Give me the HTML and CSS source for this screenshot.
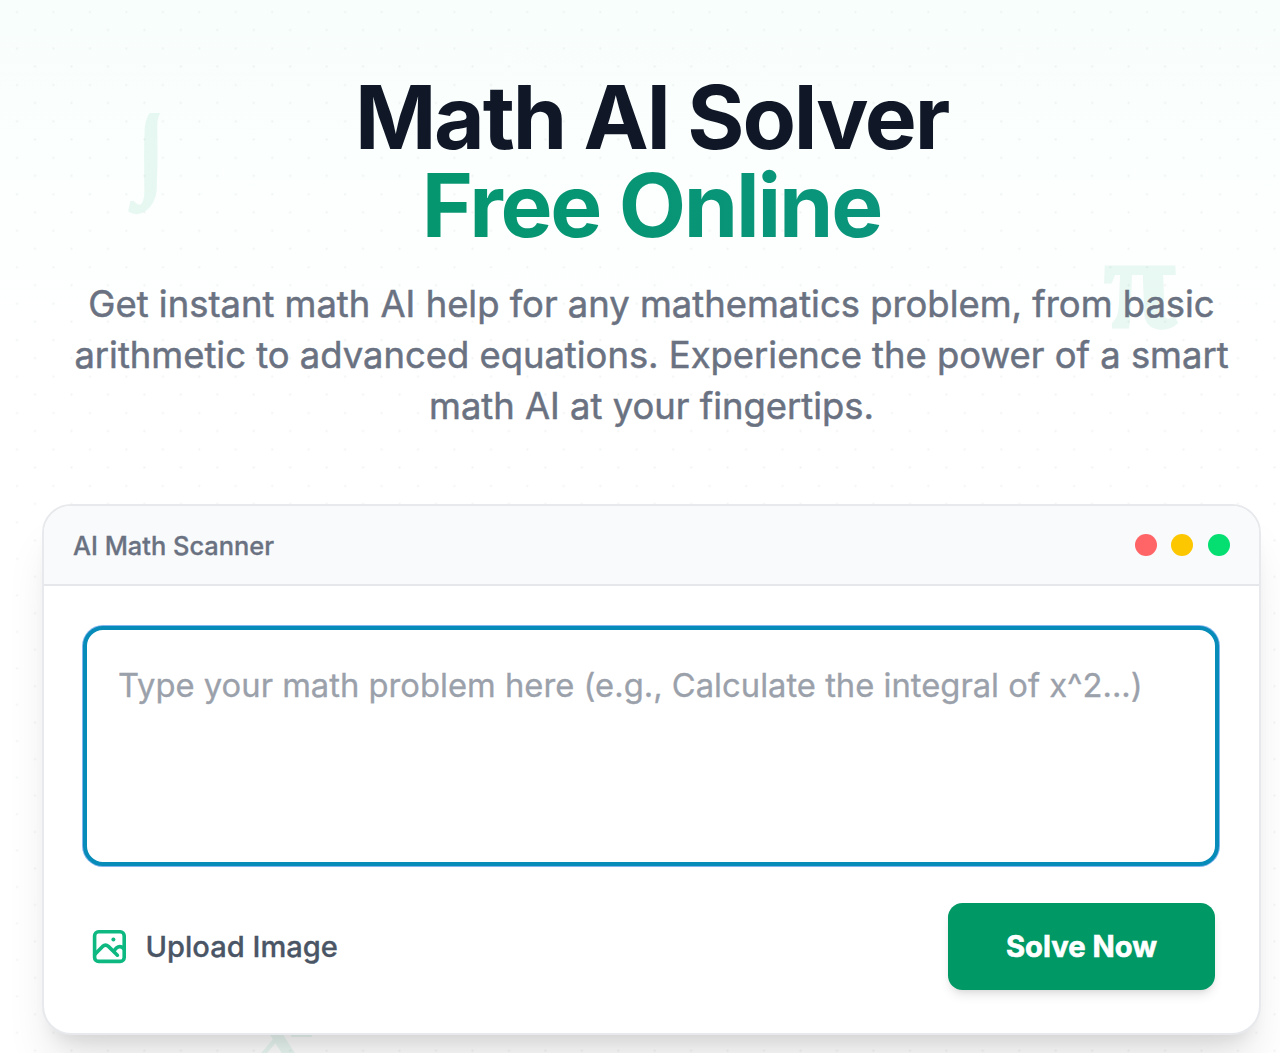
FILE: index.html
```html
<!DOCTYPE html>
<html lang="en">
<head>
<meta charset="utf-8">
<title>Math AI Solver Free Online</title>
<link rel="stylesheet" href="styles.css">
</head>
<body>
<main class="page">
  <span class="symbol integral" aria-hidden="true">∫</span>
  <span class="symbol pi" aria-hidden="true">π</span>
  <span class="symbol square" aria-hidden="true">x<sup class="power">2</sup></span>
  <h1 class="title"><span class="line first">Math AI Solver</span><span class="line accent">Free Online</span></h1>
  <p class="lead"><span class="line">Get instant math AI help for any mathematics problem, from basic</span> <span class="line">arithmetic to advanced equations. Experience the power of a smart</span> <span class="line">math AI at your fingertips.</span></p>
  <section class="card">
    <header class="card-head">
      <span class="card-title">AI Math Scanner</span>
      <div class="lights"><i class="light red"></i><i class="light yellow"></i><i class="light green"></i></div>
    </header>
    <div class="card-body">
      <textarea class="problem" placeholder="Type your math problem here (e.g., Calculate the integral of x^2...)"></textarea>
      <div class="actions">
        <div class="upload">
          <svg class="upload-icon" viewBox="0 0 34 34" fill="none" stroke="currentColor" stroke-width="3.6" stroke-linecap="round" stroke-linejoin="round">
            <rect x="2.6" y="1.8" width="29.6" height="29.6" rx="4"/>
            <path d="M2.7 24.5 10.6 16.4Q13.5 13.8 16.4 16.4L25.4 25.2"/>
            <path d="M22 20.6 24.2 18.2Q28 15 31.5 18.4"/>
            <circle cx="21.4" cy="9.6" r="2" fill="currentColor" stroke="none"/>
          </svg>
          <span class="upload-label">Upload Image</span>
        </div>
        <button class="solve" type="button">Solve Now</button>
      </div>
    </div>
  </section>
</main>
</body>
</html>
```
FILE: styles.css
```css
* { box-sizing: border-box; }
html { overflow: hidden; }
body {
  margin: 0;
  height: 1053px;
  overflow: hidden;
  font-family: Inter, "Liberation Sans", sans-serif;
  background: #fff;
}
.page {
  position: relative;
  width: 1302px;
  height: 1053px;
  padding: 74px 41px 0 42px;
  overflow: hidden;
  background:
    radial-gradient(circle at 17px 12px, rgba(80, 95, 90, .09) 0, rgba(80, 95, 90, 0) 1.7px) 0 0 / 36.46px 36.46px,
    radial-gradient(circle at 35px 30px, rgba(80, 95, 90, .09) 0, rgba(80, 95, 90, 0) 1.7px) 0 0 / 36.46px 36.46px,
    linear-gradient(#f8fefc 0, #fbfffd 150px, #fff 370px);
}
.line { display: block; white-space: nowrap; }
.title {
  position: relative;
  margin: 0;
  text-align: center;
  font-size: 87.4px;
  line-height: 87.5px;
  font-weight: 700;
  letter-spacing: -.025em;
  color: #101828;
}
.accent {
  width: fit-content;
  margin: 0 auto;
  color: transparent;
  background: linear-gradient(90deg, #05966f, #0a957c);
  background-clip: text;
}
.lead {
  position: relative;
  margin: 30px 0 0;
  text-align: center;
  font-size: 36.4px;
  line-height: 51px;
  color: #6a7282;
  -webkit-text-stroke: .5px #6a7282;
}
.symbol {
  position: absolute;
  font-family: "Liberation Serif", serif;
  font-weight: 700;
  line-height: 1;
  color: #00aa73;
  opacity: .08;
}
.integral {
  left: 128px;
  top: 83px;
  width: 32px;
  height: 150px;
  padding: 9px 0 0 8px;
  overflow: hidden;
  clip-path: inset(30px 0 0 0);
  font-size: 109px;
  -webkit-text-stroke: 4px #00aa73;
}
.pi {
  left: 1103px;
  top: 217px;
  font-size: 131px;
  font-style: italic;
  transform: skewX(12deg);
  -webkit-text-stroke: 3px #00aa73;
}
.square { left: 256px; top: 985px; font-size: 88px; }
.power { position: absolute; left: 33px; top: 9.5px; font-size: 50px; line-height: 1; }
.card {
  position: relative;
  width: 1219px;
  height: 531px;
  margin-top: 72px;
  border: 2px solid #e7e9ec;
  border-radius: 29px;
  overflow: hidden;
  background: #fff;
  box-shadow: 0 36px 46px -9px rgba(0, 0, 0, .1), 0 15px 18px -11px rgba(0, 0, 0, .1);
}
.card-head {
  display: flex;
  align-items: center;
  justify-content: space-between;
  height: 80px;
  padding: 0 29px;
  border-bottom: 2px solid #e5e7eb;
  background: #f9fafb;
}
.card-title { font-size: 25.4px; font-weight: 500; color: #6a7282; -webkit-text-stroke: .3px #6a7282; }
.lights { display: flex; gap: 14.6px; }
.light { width: 22px; height: 22px; border-radius: 50%; }
.red { background: #ff6467; }
.yellow { background: #fdc700; }
.green { background: #05df72; }
.card-body { padding: 40px 39px 0; }
.problem {
  display: block;
  width: 1136px;
  height: 240px;
  padding: 32px 31px;
  resize: none;
  outline: none;
  border: 4px solid #078bb8;
  border-radius: 20px;
  box-shadow: 0 0 0 1px #83b5ee;
  background: #fff;
  font: 400 32.75px/46px Inter, sans-serif;
}
.problem::placeholder { color: #9ba1ab; opacity: 1; -webkit-text-stroke: .3px #9ba1ab; }
.actions { display: flex; align-items: center; justify-content: space-between; margin-top: 37px; padding: 0 5px 0 9px; }
.upload { display: flex; align-items: center; gap: 19.5px; }
.upload-icon { display: block; width: 34px; height: 34px; color: #0db981; }
.upload-label { font-size: 29.1px; font-weight: 500; color: #4a5565; -webkit-text-stroke: .3px #4a5565; }
.solve {
  width: 267px;
  height: 87px;
  border: 0;
  border-radius: 14.5px;
  background: #009966;
  color: #fff;
  font: 700 29.2px/44px Inter, sans-serif;
  -webkit-text-stroke: .6px #fff;
  box-shadow: 0 7px 11px -2px rgba(0, 0, 0, .1), 0 4px 7px -4px rgba(0, 0, 0, .1);
}
```
